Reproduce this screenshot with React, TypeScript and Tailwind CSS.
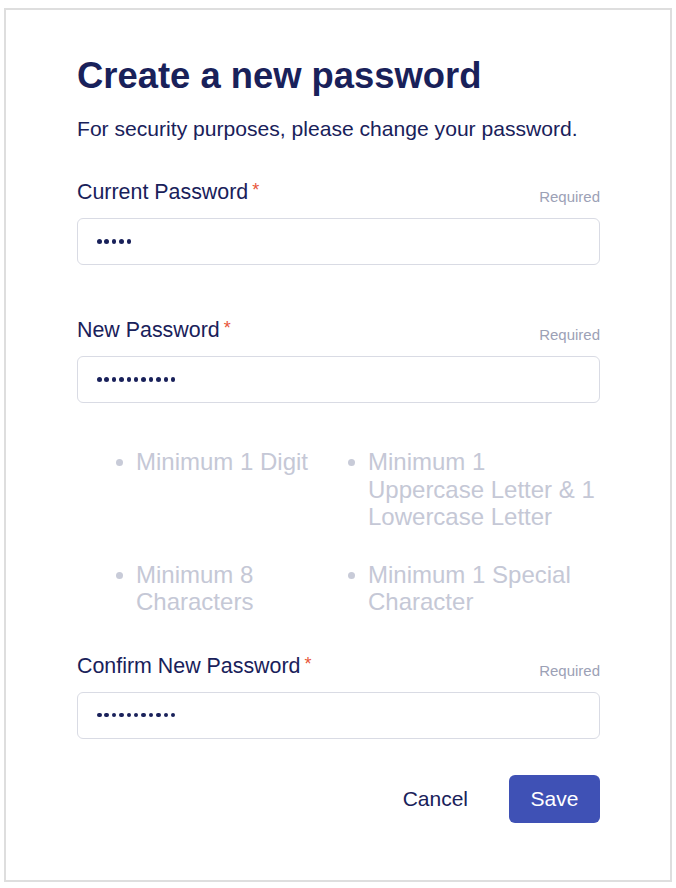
const navy = "text-[#19215a]";

const Dots = ({ count }: { count: number }) => (
  <div className="flex items-center gap-[2.9px]">
    {Array.from({ length: count }).map((_, i) => (
      <span key={i} className="block w-[4.5px] h-[4.5px] rounded-full bg-[#19215a]" />
    ))}
  </div>
);

const Field = ({ label, count, className }: { label: string; count: number; className: string }) => (
  <div className={className}>
    <div className="flex items-end justify-between">
      <label className={`text-[21.4px] leading-[28px] ${navy}`}>
        {label}
        <span className="ml-[4px] inline-block align-top mt-[3px] text-[18px] leading-[18px] text-[#e8553a]">*</span>
      </label>
      <span className="text-[15px] leading-[18px] text-[#9ca1b6]">Required</span>
    </div>
    <div className="mt-[12px] h-[47px] rounded-[6px] border border-[#d9dbe4] bg-white flex items-center pl-[19px]">
      <Dots count={count} />
    </div>
  </div>
);

const Rule = ({ text }: { text: string }) => (
  <li className="flex items-start gap-[13px]">
    <span className="mt-[11px] block w-[7px] h-[7px] shrink-0 rounded-full bg-[#c8cbd8]" />
    <span>{text}</span>
  </li>
);

export default function App() {
  return (
    <div className="w-[676px] h-[888px] bg-white pt-[8px] pl-[4px]" style={{ fontFamily: '"Liberation Sans", Arial, sans-serif' }}>
      <div className="w-[668px] h-[874px] border-2 border-[#dedede] pt-[44px] pl-[71px] pr-[70px]">
        <h1 className={`text-[36.4px] leading-[44px] font-bold ${navy}`}>Create a new password</h1>
        <p className={`mt-[17px] text-[21.1px] leading-[28px] ${navy}`}>
          For security purposes, please change your password.
        </p>

        <Field label="Current Password" count={5} className="mt-[35px]" />
        <Field label="New Password" count={11} className="mt-[51px]" />

        <ul className="mt-[45px] ml-[39px] grid grid-cols-[232px_1fr] gap-y-[30px] text-[24px] leading-[27.5px] text-[#c5c8d6]">
          <Rule text="Minimum 1 Digit" />
          <Rule text="Minimum 1 Uppercase Letter & 1 Lowercase Letter" />
          <Rule text="Minimum 8 Characters" />
          <Rule text="Minimum 1 Special Character" />
        </ul>

        <Field label="Confirm New Password" count={11} className="mt-[36px]" />

        <div className="mt-[36px] flex items-center justify-end gap-[20px]">
          <button className={`h-[48px] px-[21px] text-[21px] ${navy}`}>Cancel</button>
          <button className="h-[48px] w-[91px] rounded-[6px] bg-[#3f51b5] text-[21px] text-white">Save</button>
        </div>
      </div>
    </div>
  );
}
